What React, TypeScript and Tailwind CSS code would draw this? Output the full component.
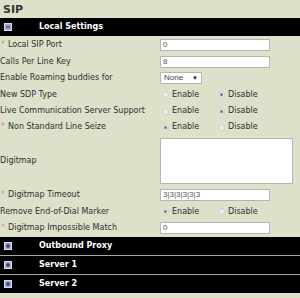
import React from "react";

const Icon = ({ open }: { open?: boolean }) => (
  <svg width="8" height="8" viewBox="0 0 8 8" className="shrink-0">
    <rect x="0" y="0" width="8" height="8" fill="#d8dcef" />
    <rect x="1" y="1" width="6" height="6" fill="#9ea6cf" />
    <rect x="2" y="3.5" width="4" height="1" fill="#1a1f4a" />
    {!open && <rect x="3.5" y="2" width="1" height="4" fill="#1a1f4a" />}
  </svg>
);

const Bar = ({ title, open, line }: { title: string; open?: boolean; line?: boolean }) => (
  <div className={`bg-black flex items-center pl-[4px] ${line ? "border-b border-[#a8a8a8] h-[19px]" : "h-[18px]"}`}>
    <Icon open={open} />
    <span className="ml-[27px] text-white font-bold text-[8px]">{title}</span>
  </div>
);

const Label = ({ text, req }: { text: string; req?: boolean }) => (
  <div className="w-[160px] shrink-0 whitespace-nowrap flex items-center">
    {req && <span className="w-[8px] pl-[1px] text-[#e8876a]">*</span>}
    <span>{text}</span>
  </div>
);

const Input = ({ value }: { value: string }) => (
  <div className="w-[110px] h-[12px] border border-[#b5b5b5] bg-white flex items-center pl-[2px] text-[8px] text-[#555] font-['Liberation_Sans',sans-serif]">
    {value}
  </div>
);

const Radio = ({ on }: { on?: boolean }) => (
  <span className="w-[7px] h-[7px] rounded-full bg-[#ececec] border border-[#d0d0d0] flex items-center justify-center shrink-0">
    {on && <span className="w-[3px] h-[3px] rounded-full bg-[#777]" />}
  </span>
);

const Radios = ({ first }: { first: boolean }) => (
  <div className="flex items-center">
    <div className="w-[56px] flex items-center ml-[2px]">
      <Radio on={first} />
      <span className="ml-[3px]">Enable</span>
    </div>
    <div className="flex items-center">
      <Radio on={!first} />
      <span className="ml-[3px]">Disable</span>
    </div>
  </div>
);

const Row = ({ h, children }: { h: string; children: React.ReactNode }) => (
  <div className={`flex items-center ${h}`}>{children}</div>
);

export default function App() {
  return (
    <div className="w-[300px] h-[298px] bg-[#dde1ca] font-['DejaVu_Sans',sans-serif] text-[8px] text-[#2e2e2e] overflow-hidden">
      <div className="h-[18px] pl-[3px] pt-[2px] font-bold text-[11px] text-[#333]">SIP</div>
      <Bar title="Local Settings" open />
      <div className="h-[1px]" />
      <Row h="h-[16px]">
        <Label text="Local SIP Port" req />
        <Input value="0" />
      </Row>
      <Row h="h-[17px]">
        <Label text="Calls Per Line Key" />
        <Input value="8" />
      </Row>
      <Row h="h-[16px]">
        <Label text="Enable Roaming buddies for" />
        <div className="w-[42px] h-[12px] border border-[#b5b5b5] bg-white flex items-center justify-between px-[3px] text-[8px] text-[#444] font-['Liberation_Sans',sans-serif]">
          <span>None</span>
          <span className="text-[6px] text-[#222]">▼</span>
        </div>
      </Row>
      <Row h="h-[17px]">
        <Label text="New SDP Type" />
        <Radios first={false} />
      </Row>
      <Row h="h-[16px]">
        <Label text="Live Communication Server Support" />
        <Radios first={false} />
      </Row>
      <Row h="h-[16px]">
        <Label text="Non Standard Line Seize" req />
        <Radios first={true} />
      </Row>
      <Row h="h-[51px]">
        <Label text="Digitmap" />
        <div className="w-[133px] h-[46px] border border-[#b5b5b5] bg-white" />
      </Row>
      <Row h="h-[17px]">
        <Label text="Digitmap Timeout" req />
        <Input value="3|3|3|3|3|3" />
      </Row>
      <Row h="h-[17px]">
        <Label text="Remove End-of-Dial Marker" />
        <Radios first={true} />
      </Row>
      <Row h="h-[16px]">
        <Label text="Digitmap Impossible Match" req />
        <Input value="0" />
      </Row>
      <div className="h-[1px]" />
      <Bar title="Outbound Proxy" line />
      <Bar title="Server 1" line />
      <Bar title="Server 2" />
    </div>
  );
}
